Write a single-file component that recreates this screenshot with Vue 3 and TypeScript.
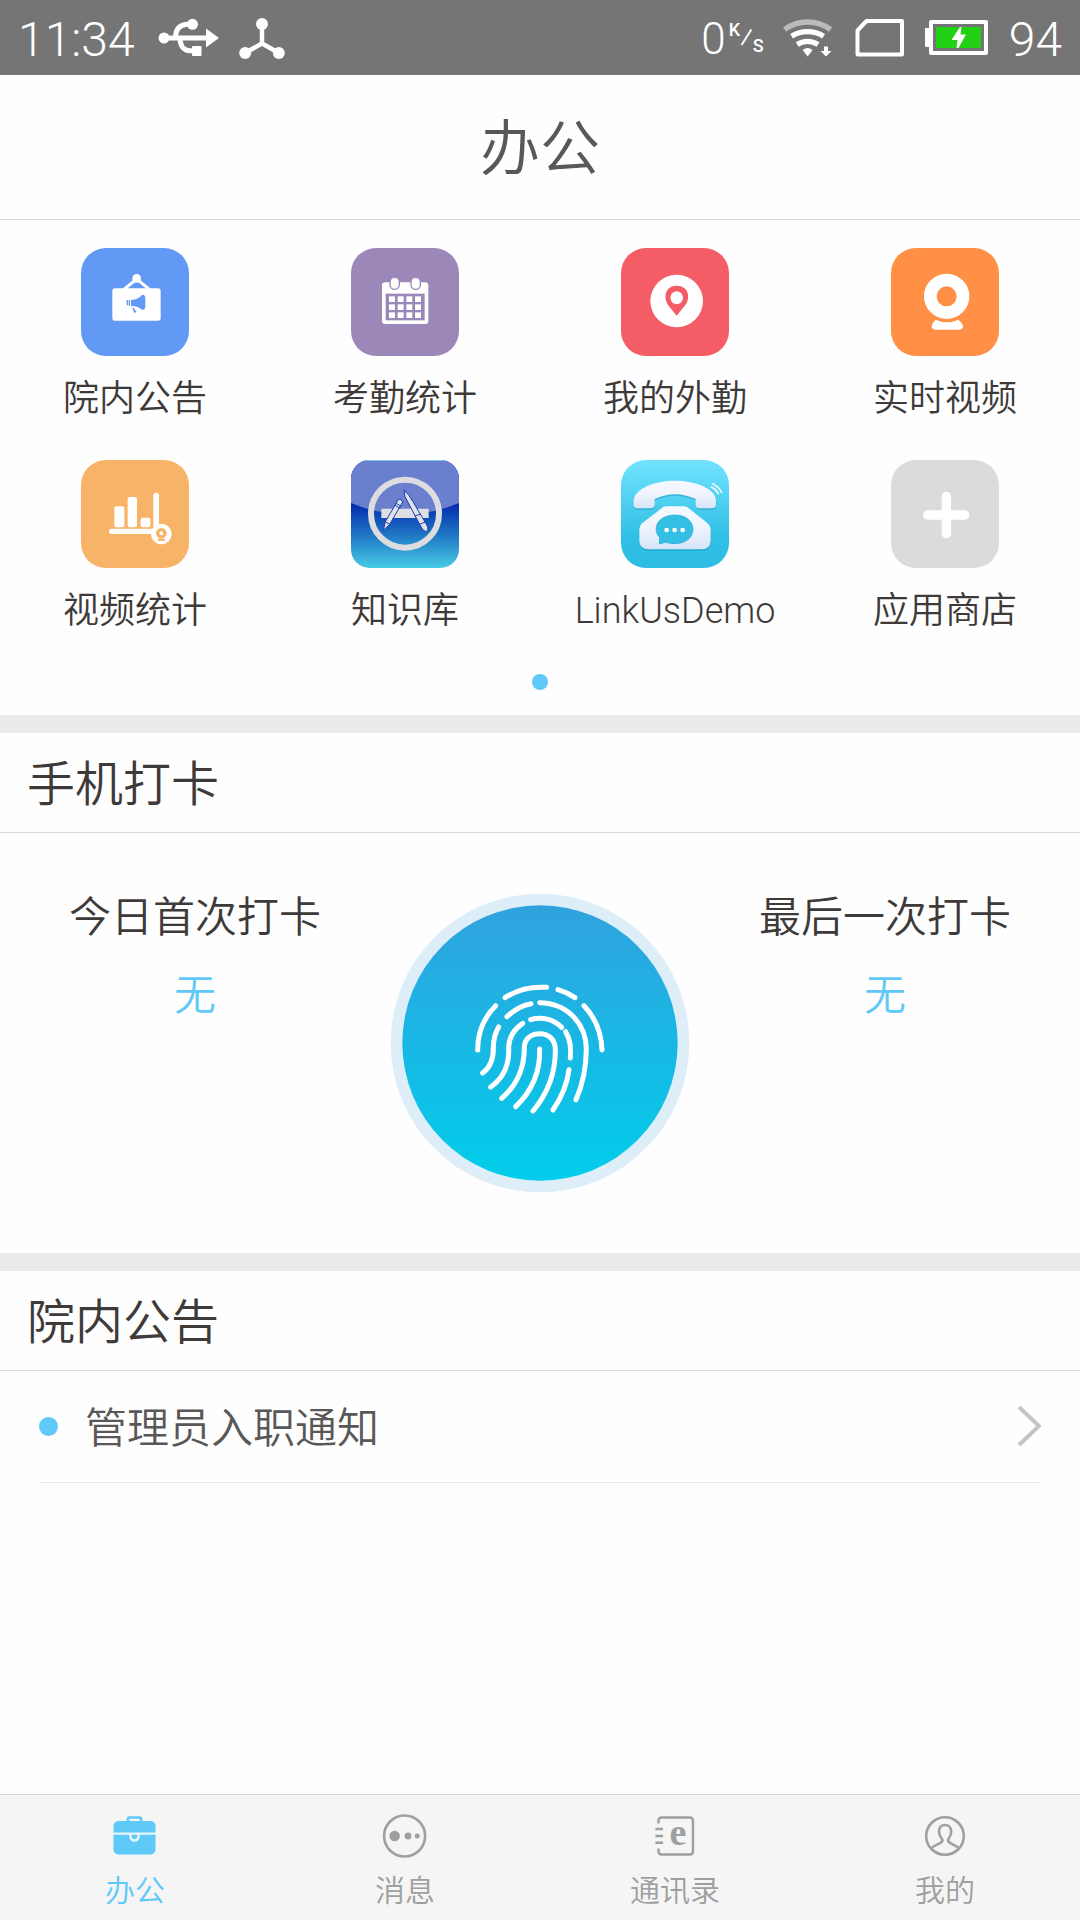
<script setup lang="ts">
import { ref } from 'vue'

interface AppEntry {
  id: string
  label: string
}

interface Tab {
  id: string
  label: string
}

const apps: AppEntry[] = [
  { id: 'notice', label: '院内公告' },
  { id: 'attendance', label: '考勤统计' },
  { id: 'field', label: '我的外勤' },
  { id: 'live', label: '实时视频' },
  { id: 'stats', label: '视频统计' },
  { id: 'library', label: '知识库' },
  { id: 'linkus', label: 'LinkUsDemo' },
  { id: 'store', label: '应用商店' },
]

const tabs: Tab[] = [
  { id: 'office', label: '办公' },
  { id: 'message', label: '消息' },
  { id: 'contacts', label: '通讯录' },
  { id: 'me', label: '我的' },
]

const notices: string[] = ['管理员入职通知']
const activeTab = ref('office')
const firstPunch = ref('无')
const lastPunch = ref('无')

const calendarCols: number[] = [988, 1014, 1040, 1066]
const calendarRows: number[] = [197, 221, 245]
</script>

<template>
  <div class="page">
    <div class="status">
      <span class="clock">11:34</span>
      <svg class="usb" width="66" height="46" viewBox="0 0 66 46" fill="#fff">
        <circle cx="8" cy="23" r="5.5" />
        <path d="M8 23H51M19.500 23C19.500 14 24 9.500 32 9.300H36M24 23C24 31 28 35.700 34 35.700H38" fill="none" stroke="#fff" stroke-width="5" />
        <circle cx="36.500" cy="9.300" r="5.500" />
        <rect x="36" y="31" width="9.500" height="10" rx="1" />
        <path d="M50 13.500L63 23L50 32.500Z" />
      </svg>
      <svg class="nodes" width="52" height="48" viewBox="0 0 52 48" fill="#fff">
        <path d="M26 10V29.500L9 39M26 29.500L43 39" fill="none" stroke="#fff" stroke-width="4.500" />
        <circle cx="26" cy="10" r="6" />
        <circle cx="9.200" cy="39" r="6" />
        <circle cx="42.800" cy="39" r="6" />
      </svg>
      <span class="spacer"></span>
      <span class="rate">0</span>
      <span class="unit"><span class="k">K</span><span class="slash">⁄</span><span class="s">S</span></span>
      <svg class="wifi" width="52" height="44" viewBox="0 0 52 44" fill="none" stroke="#fff" stroke-width="5.300">
        <path d="M2.600 13.500A39 39 0 0 1 48.600 13.500" stroke="#bababa" />
        <path d="M9.600 20.300A30 30 0 0 1 41.600 20.300" />
        <path d="M15.200 28.500A19 19 0 0 1 36 28.500" />
        <path d="M20.600 34Q25.600 30 30.600 34L25.600 40.500Z" fill="#fff" stroke="none" />
        <path d="M42 30.500H46V35H49.500L44 40.500L38.500 35H42Z" fill="#fff" stroke="none" />
      </svg>
      <svg class="sim" width="54" height="44" viewBox="0 0 54 44" fill="none" stroke="#fff" stroke-width="4" stroke-linejoin="round">
        <path d="M13.500 5H49V38.500H4.500V14.500Z" />
      </svg>
      <svg class="battery" width="66" height="44" viewBox="0 0 66 44">
        <rect x="2" y="12" width="5" height="19" rx="1" fill="#fff" />
        <rect x="8" y="6" width="55" height="31" fill="none" stroke="#fff" stroke-width="4" stroke-linejoin="round" />
        <rect x="13" y="11" width="45" height="21" fill="#22d116" />
        <path d="M37 11L28.500 24H34.500L33.500 32H35.500L43 18.500H37.500L38.500 11Z" fill="#fff" />
      </svg>
      <span class="level">94</span>
    </div>

    <header class="header"><h1>办公</h1></header>

    <main class="main">
      <section class="apps">
        <div class="grid">
          <button v-for="app in apps" :key="app.id" type="button" class="app">
            <svg v-if="app.id === 'notice'" class="tile" viewBox="63 52 324 324">
              <rect x="63" y="52" width="324" height="324" rx="75" fill="#6299f5" />
              <rect x="157" y="173" width="145" height="97" rx="8" fill="#fff" />
              <circle cx="230" cy="143" r="13" fill="#fff" />
              <path d="M192 176L230 145L268 176" fill="none" stroke="#fff" stroke-width="9" />
              <path d="M213 208Q235 206 246 193Q255 190 256 203V226Q255 240 246 237Q235 226 213 225Z" fill="#6299f5" />
              <path d="M202 208V224M208 208V225" stroke="#6299f5" stroke-width="4" />
              <path d="M216 231L223 246L230 245L222 233Z" fill="#6299f5" />
            </svg>
            <svg v-else-if="app.id === 'attendance'" class="tile" viewBox="874 52 324 324">
              <rect x="874" y="52" width="324" height="324" rx="75" fill="#9c88b8" />
              <rect x="967" y="155" width="139" height="125" rx="10" fill="#fff" />
              <rect x="978" y="189" width="117" height="80" fill="#9c88b8" />
              <template v-for="y in calendarRows" :key="y">
                <rect v-for="x in calendarCols" :key="x" :x="x" :y="y" width="18" height="17" fill="#fff" />
              </template>
              <rect x="991" y="140" width="28" height="36" rx="14" fill="#fff" stroke="#9c88b8" stroke-width="4" />
              <rect x="1054" y="140" width="28" height="36" rx="14" fill="#fff" stroke="#9c88b8" stroke-width="4" />
            </svg>
            <svg v-else-if="app.id === 'field'" class="tile" viewBox="184 52 324 324">
              <rect x="184" y="52" width="324" height="324" rx="75" fill="#f45c66" />
              <circle cx="351" cy="211" r="79" fill="#fff" />
              <path d="M351 255L325 223C310 199 317 165 351 165C385 165 394 199 377 223Z" fill="#f45c66" />
              <circle cx="351" cy="201" r="19" fill="#fff" />
            </svg>
            <svg v-else-if="app.id === 'live'" class="tile" viewBox="993 52 324 324">
              <rect x="993" y="52" width="324" height="324" rx="75" fill="#ff9045" />
              <circle cx="1160" cy="197" r="49" fill="none" stroke="#fff" stroke-width="38" />
              <path d="M1127 267Q1160 283 1195 267Q1208 278 1209 287Q1208 297 1198 297H1126Q1116 297 1115 287Q1116 276 1127 267Z" fill="#fff" />
            </svg>
            <svg v-else-if="app.id === 'stats'" class="tile" viewBox="63 60 324 324">
              <rect x="63" y="60" width="324" height="324" rx="75" fill="#f7b367" />
              <g fill="#fff">
                <rect x="163" y="199" width="30" height="63" rx="6" />
                <rect x="203" y="171" width="28" height="91" rx="6" />
                <rect x="242" y="233" width="29" height="29" rx="6" />
                <rect x="280" y="158" width="17" height="110" rx="8" />
                <rect x="147" y="266" width="140" height="16" rx="8" />
                <circle cx="304" cy="282" r="31" />
              </g>
              <circle cx="304" cy="280" r="11" fill="none" stroke="#f7b367" stroke-width="10" />
              <path d="M294 296H314V303H294Z" fill="#f7b367" />
            </svg>
            <svg v-else-if="app.id === 'library'" class="tile" viewBox="873 60 324 324">
              <defs>
                <linearGradient id="libraryBg" x1="0" y1="0" x2="0" y2="1">
                  <stop offset="0.400" stop-color="#0329ae" />
                  <stop offset="0.700" stop-color="#2078c4" />
                  <stop offset="1" stop-color="#46cbe5" />
                </linearGradient>
                <clipPath id="libraryClip"><rect x="873" y="60" width="324" height="324" rx="56" /></clipPath>
              </defs>
              <g clip-path="url(#libraryClip)">
                <rect x="873" y="60" width="324" height="324" fill="url(#libraryBg)" />
                <path d="M873 60H1197V189Q1120 222 1035 222Q950 222 873 189Z" fill="#6b7fcf" />
                <path d="M890 61H1180" stroke="#80dcf0" stroke-width="3" />
              </g>
              <path d="M964 206H1106V234H964Z" fill="#dedfe4" />
              <g stroke="#1c3eb4" stroke-width="3">
                <path d="M1016 177Q1024 176 1028 186L989 253L970 271L976 245Z" fill="#e2e3e6" />
                <path d="M1032 150Q1048 164 1058 184L1098 251Q1105 261 1104 272Q1096 277 1089 270L1079 253L1035 170Z" fill="#e2e3e6" />
              </g>
              <path d="M1008 190L1024 199M1005 196L1021 205M976 245L989 253M1064 228L1083 222M1078 253L1096 246" stroke="#1c3eb4" stroke-width="3" />
              <circle cx="1035" cy="221" r="102" fill="none" stroke="#dddde0" stroke-width="18" />
            </svg>
            <svg v-else-if="app.id === 'linkus'" class="tile" viewBox="183 60 324 324">
              <defs>
                <linearGradient id="linkBg" x1="0" y1="0" x2="0" y2="1">
                  <stop offset="0" stop-color="#72e3ff" />
                  <stop offset="0.700" stop-color="#31c0e5" />
                  <stop offset="1" stop-color="#2fbee3" />
                </linearGradient>
                <linearGradient id="phoneFill" x1="0" y1="0" x2="0" y2="1">
                  <stop offset="0" stop-color="#f7f9ff" />
                  <stop offset="0.500" stop-color="#eff3fd" />
                  <stop offset="1" stop-color="#d6e5f8" />
                </linearGradient>
              </defs>
              <rect x="183" y="60" width="324" height="324" rx="75" fill="url(#linkBg)" />
              <g fill="#1a96b8" opacity="0.500" transform="translate(1 4)">
                <path d="M221 180C225 145 285 122 345 122C405 122 466 145 468 180V196Q467 205 456 205H418Q408 205 407 195V177Q375 163 345 163Q315 163 284 177V195Q283 205 273 205H232Q222 205 221 196Z" />
                <path d="M303 206Q309 199 320 199H370Q382 199 388 206L441 248Q452 257 452 270V304Q450 327 425 328H265Q240 327 238 304V270Q238 257 248 248Z" />
              </g>
              <path d="M221 180C225 145 285 122 345 122C405 122 466 145 468 180V196Q467 205 456 205H418Q408 205 407 195V177Q375 163 345 163Q315 163 284 177V195Q283 205 273 205H232Q222 205 221 196Z" fill="url(#phoneFill)" />
              <path d="M303 206Q309 199 320 199H370Q382 199 388 206L441 248Q452 257 452 270V304Q450 327 425 328H265Q240 327 238 304V270Q238 257 248 248Z" fill="url(#phoneFill)" />
              <path d="M298 312L299 292C287 281 288 267 289 260C293 238 318 225 345 225C376 225 399 243 399 268C399 293 376 311 345 311Q330 311 317 307Z" fill="#32bfe3" stroke="#1ba9d0" stroke-width="2" />
              <circle cx="320" cy="270" r="7" fill="#fff" />
              <circle cx="344" cy="270" r="7" fill="#fff" />
              <circle cx="368" cy="270" r="7" fill="#fff" />
              <path d="M458 131Q476 140 485 157M454 141Q468 147 475 161" fill="none" stroke="#eafaff" stroke-width="5" stroke-linecap="round" />
            </svg>
            <svg v-else class="tile" viewBox="993 60 324 324">
              <rect x="993" y="60" width="324" height="324" rx="75" fill="#dadcdb" />
              <path d="M1159 169V281M1103 225H1214" stroke="#fff" stroke-width="28" stroke-linecap="round" />
            </svg>
            <span class="app-label">{{ app.label }}</span>
          </button>
        </div>
        <div class="pager"><span class="pager-dot"></span></div>
      </section>

      <section class="block">
        <h2>手机打卡</h2>
        <div class="punch">
          <div class="punch-col">
            <span class="punch-name">今日首次打卡</span>
            <span class="punch-time">{{ firstPunch }}</span>
          </div>
          <button type="button" class="punch-button" aria-label="打卡">
            <svg viewBox="31 38 900 900" fill="none" stroke="#fff" stroke-width="15" stroke-linecap="round">
              <defs>
                <linearGradient id="punchBg" x1="0" y1="0" x2="0" y2="1">
                  <stop offset="0" stop-color="#30a2de" />
                  <stop offset="0.900" stop-color="#06c9e8" />
                  <stop offset="1" stop-color="#02cdea" />
                </linearGradient>
              </defs>
              <circle cx="481" cy="488" r="448" fill="#deeef9" stroke="none" />
              <circle cx="481" cy="488" r="413" fill="url(#punchBg)" stroke="none" />
              <path d="M376 352Q430 316 501 321" />
              <path d="M535 328Q562 336 586 352" />
              <path d="M294 509Q294 430 348 376" />
              <path d="M613 376Q664 430 667 509" />
              <path d="M382 409Q415 377 454 370" />
              <path d="M480 367C565 368 620 433 620 507Q619 591 589 658" />
              <path d="M309 578C333 560 342 534 341 500Q342 465 357 440" />
              <path d="M333 620C369 595 390 556 387 500Q389 456 429 429" />
              <path d="M453 418C487 408 521 417 546 441" />
              <path d="M558 454Q577 486 572 533" />
              <path d="M366 654C411 615 434 564 434 502C434 475 454 460 480 460C508 460 526 478 527 507C528 580 504 639 460 692" />
              <path d="M480 506C482 573 458 631 408 679" />
              <path d="M568 568Q560 631 520 689" />
            </svg>
          </button>
          <div class="punch-col">
            <span class="punch-name">最后一次打卡</span>
            <span class="punch-time">{{ lastPunch }}</span>
          </div>
        </div>
      </section>

      <section class="block">
        <h2>院内公告</h2>
        <ul class="notices">
          <li v-for="notice in notices" :key="notice">
            <a href="#" class="notice">
              <span class="bullet"></span>
              <span class="notice-text">{{ notice }}</span>
              <svg width="26" height="42" viewBox="0 0 26 42" fill="none" stroke="#c4c4c4" stroke-width="4">
                <path d="M4 1L24 20L4 39" />
              </svg>
            </a>
          </li>
        </ul>
      </section>
    </main>

    <nav class="tabs">
      <button
        v-for="tab in tabs"
        :key="tab.id"
        type="button"
        class="tab"
        :class="{ active: tab.id === activeTab }"
        @click="activeTab = tab.id"
      >
        <svg v-if="tab.id === 'office'" width="48" height="48" viewBox="0 0 48 48">
          <path d="M17 11V8Q17 6.500 18.500 6.500H28.500Q30 6.500 30 8V11" fill="none" stroke="currentColor" stroke-width="2.600" />
          <rect x="2.500" y="10" width="42" height="33.500" rx="5" fill="currentColor" />
          <path d="M2 22.600H45M19.500 23V25.500Q20 29.500 23.500 29.500Q27 29.500 27.500 25.500V23" fill="none" stroke="#e6f6fe" stroke-width="2.400" />
        </svg>
        <svg v-else-if="tab.id === 'message'" width="48" height="48" viewBox="0 0 48 48" fill="currentColor">
          <circle cx="23.600" cy="25" r="20.500" fill="none" stroke="currentColor" stroke-width="2.600" />
          <circle cx="13.600" cy="25" r="5.300" />
          <circle cx="27" cy="25" r="3.400" />
          <circle cx="36.200" cy="25" r="2.500" />
        </svg>
        <svg v-else-if="tab.id === 'contacts'" width="48" height="48" viewBox="0 0 48 48" fill="none" stroke="currentColor" stroke-width="2.400">
          <path d="M7.500 12.500V10Q7.500 6.500 11 6.500H38.500Q42 6.500 42 10V40Q42 43.500 38.500 43.500H11Q7.500 43.500 7.500 40V37.500M4.500 18H12M4.500 25H12M4.500 31.700H12" />
          <text class="book-letter" x="27" y="34" text-anchor="middle" fill="currentColor" stroke="none">e</text>
        </svg>
        <svg v-else width="48" height="48" viewBox="0 0 48 48" fill="none" stroke="currentColor" stroke-width="2.600">
          <circle cx="24" cy="25" r="18.800" />
          <path d="M10.500 37.500C12 34 21 33 21.500 29.500C22 27.500 18 26.500 18 20.500C18 16.500 20.500 14 24 14C27.500 14 30.200 16.500 30.200 20.500C30.200 26.500 26.500 27.500 27 29.500C27.500 33 36 34 37.500 37.500" />
        </svg>
        <span class="tab-label">{{ tab.label }}</span>
      </button>
    </nav>
  </div>
</template>

<style>
body {
  margin: 0;
  background: #fefefe;
}
</style>

<style scoped>
.page {
  display: flex;
  flex-direction: column;
  min-height: 100vh;
  background: #fefefe;
  color: #3e3a39;
  font-family: Roboto, "Noto Sans CJK SC", sans-serif;
  font-weight: 350;
}

button {
  margin: 0;
  padding: 0;
  border: 0;
  background: none;
  color: inherit;
  font: inherit;
}

svg {
  display: block;
  flex: none;
}

.status {
  display: flex;
  align-items: center;
  box-sizing: border-box;
  height: 75px;
  padding: 0 18px;
  background: #757575;
  color: #fff;
  font-weight: 300;
  line-height: 71px;
}

.clock,
.level {
  padding-top: 4px;
  font-size: 48px;
}

.usb {
  margin-left: 21px;
}

.nodes {
  margin-left: 14px;
}

.spacer {
  flex: 1;
}

.rate {
  padding-top: 4px;
  font-size: 44px;
}

.unit {
  display: flex;
  height: 34px;
  margin: 0 18px 0 3px;
  font-size: 18px;
  font-weight: 500;
  line-height: 18px;
}

.unit .s {
  align-self: flex-end;
}

.unit .slash {
  font-size: 28px;
  font-weight: 400;
  line-height: 34px;
}

.sim {
  margin-left: 19px;
}

.battery {
  margin: 0 20px 0 16px;
}

.header {
  box-sizing: border-box;
  height: 145px;
  padding-top: 6px;
  border-bottom: 1px solid #d9d9d9;
  text-align: center;
}

h1 {
  margin: 0;
  color: #595757;
  font-size: 60px;
  font-weight: inherit;
  line-height: 138px;
}

.main {
  flex: 1;
}

.apps {
  padding: 28px 0 25px;
}

.grid {
  display: grid;
  grid-template-columns: repeat(4, 1fr);
  row-gap: 34px;
}

.app {
  display: flex;
  flex-direction: column;
  align-items: center;
  gap: 16px;
}

.tile {
  width: 108px;
  height: 108px;
}

.app-label {
  font-size: 36px;
  line-height: 54px;
}

.pager {
  display: flex;
  justify-content: center;
  padding-top: 36px;
}

.pager-dot {
  width: 16px;
  height: 16px;
  border-radius: 50%;
  background: #5fc9f8;
}

.block {
  border-top: 18px solid #ebebeb;
}

h2 {
  margin: 0;
  padding: 4px 27px 0;
  border-bottom: 1px solid #d9d9d9;
  font-size: 48px;
  font-weight: inherit;
  line-height: 95px;
}

.punch {
  display: flex;
  align-items: flex-start;
  padding: 60px 0;
}

.punch-col {
  display: flex;
  flex: 1;
  flex-direction: column;
  align-items: center;
  gap: 28px;
  font-size: 42px;
  line-height: 50px;
}

.punch-time {
  color: #5fc9f8;
}

.punch-button {
  width: 300px;
  height: 300px;
  border-radius: 50%;
}

.punch-button svg {
  width: 100%;
  height: 100%;
}

.notices {
  margin: 0;
  padding: 0 39px;
  list-style: none;
}

.notice {
  display: flex;
  align-items: center;
  border-bottom: 1px solid #e6e6e6;
  color: #595757;
  font-size: 42px;
  line-height: 107px;
  text-decoration: none;
}

.bullet {
  width: 19px;
  height: 19px;
  border-radius: 50%;
  background: #5fc9f8;
}

.notice-text {
  flex: 1;
  margin-left: 27px;
  padding-top: 4px;
}

.tabs {
  display: grid;
  grid-template-columns: repeat(4, 1fr);
  box-sizing: border-box;
  height: 126px;
  border-top: 1px solid #d6d6d6;
  background: #f5f5f5;
}

.tab {
  display: flex;
  flex-direction: column;
  align-items: center;
  gap: 10px;
  padding-top: 16px;
  color: #9e9f9f;
}

.tab.active {
  color: #5fc9f8;
}

.tab-label {
  font-size: 30px;
  line-height: 44px;
}

.book-letter {
  font-family: "Liberation Serif", serif;
  font-size: 38px;
  font-weight: 700;
}
</style>
